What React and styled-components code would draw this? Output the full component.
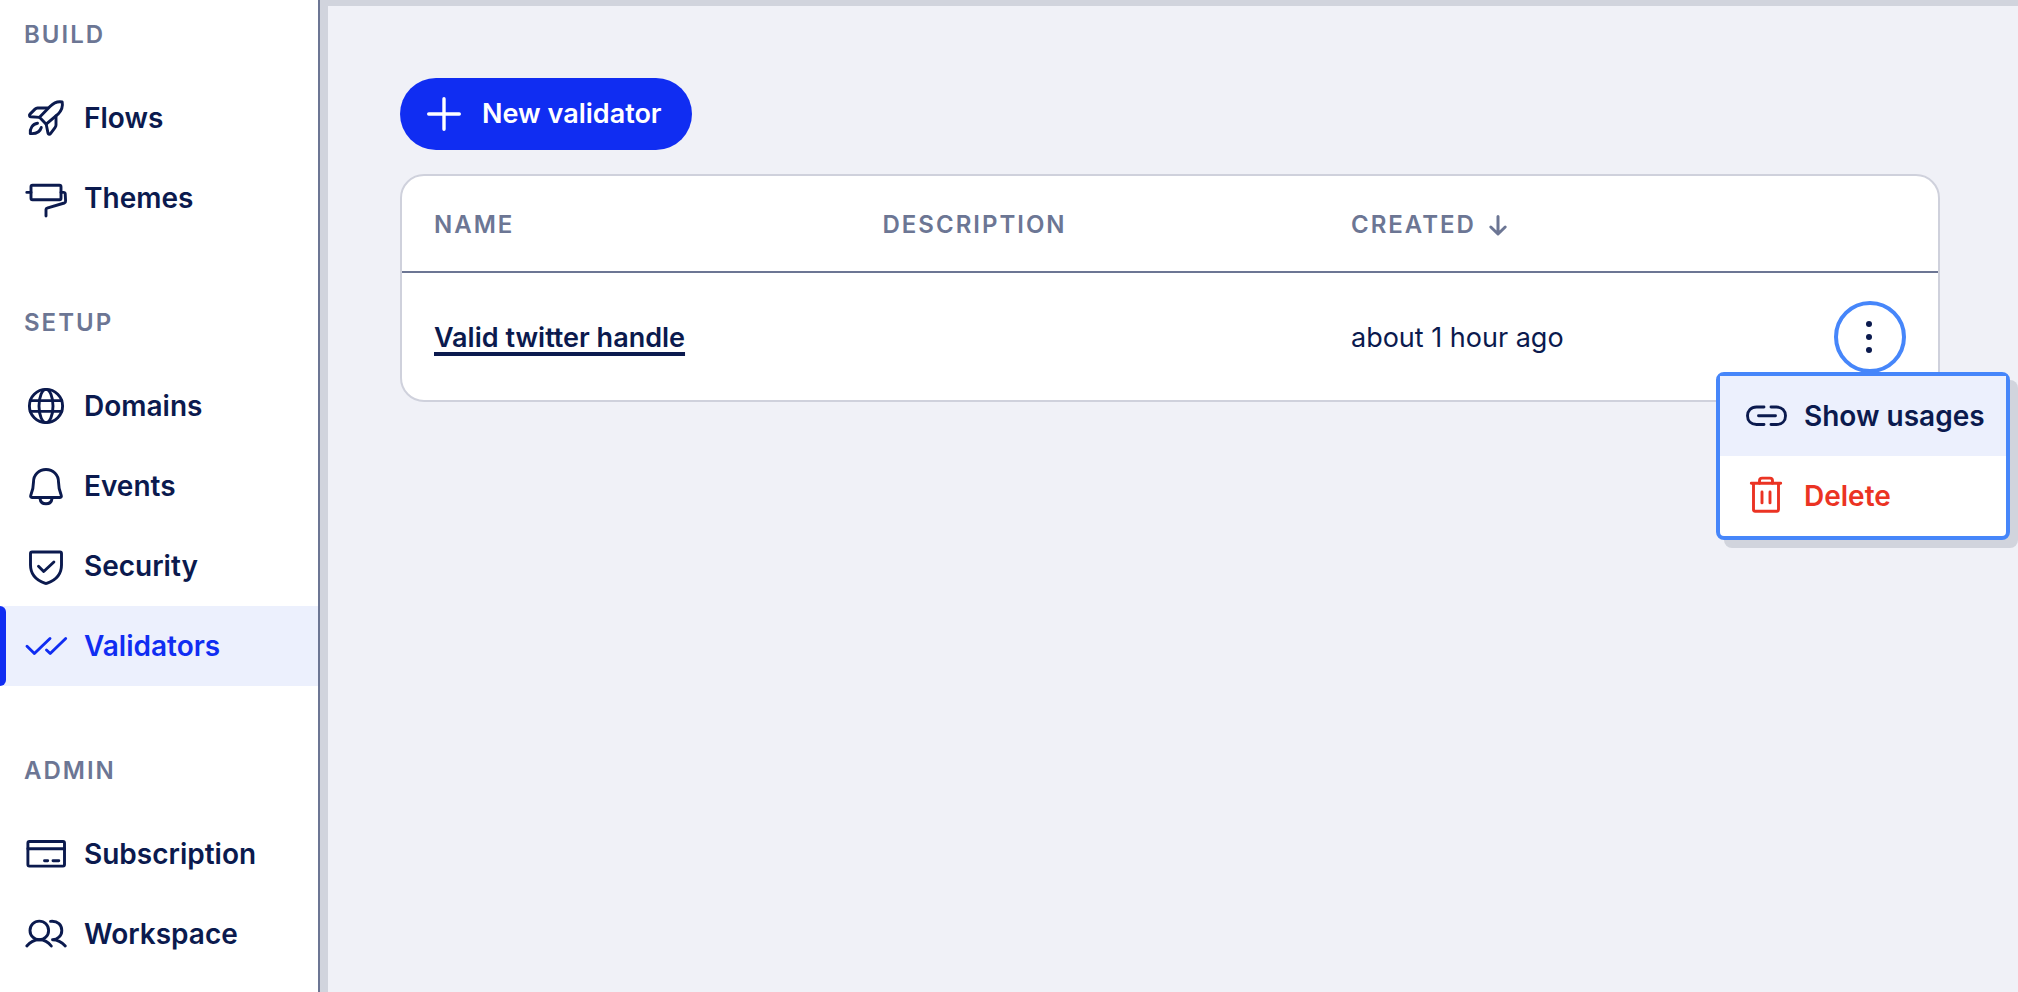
import React, { useState } from "react";
import styled, { createGlobalStyle, ThemeProvider } from "styled-components";

const theme = {
  navy: "#0b1a4e",
  primary: "#102df2",
  focus: "#4686fa",
  danger: "#eb3323",
  muted: "#6c7694",
  line: "#cfd1dc",
  shade: "#d1d4dd",
  highlight: "#ecf0fd",
  canvas: "#f0f1f7",
  white: "#ffffff",
};

const GlobalStyle = createGlobalStyle`
  * {
    box-sizing: border-box;
  }

  body {
    margin: 0;
    font-family: Inter, "Liberation Sans", sans-serif;
    font-size: 27px;
    line-height: 36px;
    color: ${theme.navy};
    background-color: ${theme.canvas};
  }

  button {
    font: inherit;
    color: inherit;
    border: none;
    padding: 0;
    background: none;
    cursor: pointer;
  }
`;

const Layout = styled.div`
  display: flex;
  min-height: 100vh;
`;

const Sidebar = styled.nav`
  flex: 0 0 320px;
  display: flex;
  flex-direction: column;
  gap: 70px;
  padding: 20px 0 18px;
  background-color: ${(props) => props.theme.white};
  border-right: 2px solid ${(props) => props.theme.muted};
`;

const GroupTitle = styled.h2`
  margin: 0 0 28px;
  padding-left: 24px;
  font-size: 24px;
  line-height: 30px;
  font-weight: 600;
  letter-spacing: 2px;
  text-transform: uppercase;
  color: ${(props) => props.theme.muted};
`;

const NavList = styled.ul`
  list-style: none;
  margin: 0;
  padding: 0;
`;

const NavLink = styled.a`
  position: relative;
  display: flex;
  align-items: center;
  gap: 14px;
  height: 80px;
  padding-left: 22px;
  font-size: 28px;
  font-weight: 600;
  text-decoration: none;
  color: ${(props) => (props.$active ? props.theme.primary : props.theme.navy)};
  background-color: ${(props) =>
    props.$active ? props.theme.highlight : "transparent"};

  &::before {
    content: "";
    display: ${(props) => (props.$active ? "block" : "none")};
    position: absolute;
    inset: 0 auto 0 0;
    width: 6px;
    border-radius: 0 6px 6px 0;
    background-color: ${(props) => props.theme.primary};
  }
`;

const Svg = styled.svg`
  flex: none;
  width: 48px;
  height: 48px;
  fill: none;
  stroke: currentColor;
  stroke-width: 2.9;
  stroke-linecap: round;
  stroke-linejoin: round;
`;

const Main = styled.main`
  flex: 1;
  min-width: 0;
  display: flex;
  flex-direction: column;
  align-items: flex-start;
  gap: 24px;
  padding: 72px 78px 72px 72px;
  border-top: 6px solid ${(props) => props.theme.shade};
  border-left: 8px solid ${(props) => props.theme.shade};
`;

const NewButton = styled.button`
  display: flex;
  align-items: center;
  gap: 14px;
  height: 72px;
  padding: 0 30px 0 20px;
  border-radius: 36px;
  font-weight: 600;
  color: ${(props) => props.theme.white};
  background-color: ${(props) => props.theme.primary};
`;

const Card = styled.div`
  width: 100%;
  border: 2px solid ${(props) => props.theme.line};
  border-radius: 24px;
  background-color: ${(props) => props.theme.white};
`;

const Table = styled.table`
  width: 100%;
  table-layout: fixed;
  border-collapse: separate;
  border-spacing: 0;
  text-align: left;
`;

const HeadCell = styled.th`
  width: ${(props) => props.$width};
  height: 97px;
  padding: 2px 32px 0;
  border-bottom: 2px solid ${(props) => props.theme.muted};
  font-size: 24px;
  line-height: 30px;
  font-weight: 600;
  letter-spacing: 2px;
  text-transform: uppercase;
  color: ${(props) => props.theme.muted};
`;

const SortButton = styled.button`
  display: flex;
  align-items: center;
  gap: 10px;
  letter-spacing: inherit;
  text-transform: inherit;
`;

const SortIcon = styled(Svg)`
  width: 24px;
  height: 24px;
`;

const Cell = styled.td`
  height: 127px;
  padding: ${(props) => (props.$flush ? "0 32px" : "2px 32px 0")};
`;

const ValidatorLink = styled.a`
  font-weight: 600;
  color: ${(props) => props.theme.navy};
  text-decoration: underline 4px;
  text-decoration-skip-ink: none;
  text-underline-offset: 5px;
`;

const Actions = styled.div`
  position: relative;
  width: 72px;
  margin-left: auto;
`;

const MoreButton = styled.button`
  display: flex;
  align-items: center;
  justify-content: center;
  width: 72px;
  height: 72px;
  border: 4px solid
    ${(props) => (props.$open ? props.theme.focus : "transparent")};
  border-radius: 50%;
`;

const Menu = styled.div`
  position: absolute;
  top: 71px;
  right: -104px;
  width: 294px;
  border: 4px solid ${(props) => props.theme.focus};
  border-radius: 8px;
  background-color: ${(props) => props.theme.white};
  box-shadow: 8px 8px 0 ${(props) => props.theme.shade};
`;

const MenuItem = styled.button`
  display: flex;
  align-items: center;
  gap: 14px;
  width: 100%;
  height: 80px;
  padding: 0 20px 0 22px;
  font-size: 28px;
  font-weight: 600;
  white-space: nowrap;
  color: ${(props) => (props.$danger ? props.theme.danger : props.theme.navy)};
  background-color: ${(props) =>
    props.$selected ? props.theme.highlight : "transparent"};
`;

const icons = {
  rocket: (
    <>
      <path d="M17.5 23.2 28 12.5C31.5 9 36.5 7.2 40.2 8c.8 4-.8 8.7-4.200 12.200L24.200 30.200Z" />
      <path d="M25.500 14H15.500c-1 0-1.800.4-2.500 1.100l-5 5c-1 1-.6 2.500.8 2.700l8.700.6M34 22v9c0 1-.4 1.900-1 2.600l-4.500 6c-.8 1-2.200.8-2.500-.5L24.200 30.200" />
      <path d="M15.500 29.300C10.500 30 7.800 34.500 8.300 39.500 14 40 18 38 19.300 33.500" />
    </>
  ),
  roller: (
    <>
      <rect x="9" y="11.300" width="30" height="14.400" rx="1.500" />
      <path d="M4.800 18.400H9M39 18.400h2.500c1 0 1.600.4 1.700 1.300l.4 7.300c.1 1-.4 1.700-1.300 2L25 34.200c-.8.2-1 .6-1 1.300v6.500" />
    </>
  ),
  globe: (
    <>
      <circle cx="24" cy="24" r="16.600" />
      <ellipse cx="24" cy="24" rx="7" ry="16.600" />
      <path d="M8.200 18.600h31.600M8.200 29.400h31.600" />
    </>
  ),
  bell: (
    <>
      <path d="M11.500 20C11.500 12.500 17 7.500 24 7.500S36.500 12.500 36.500 20c0 5 1 9 2.700 13.200.5 1.300 0 2.300-1.200 2.300H10c-1.200 0-1.700-1-1.200-2.300C10.500 29 11.500 25 11.500 20Z" />
      <path d="M18 36.500c.4 3.500 2.800 5.300 6 5.300s5.600-1.800 6-5.300" />
    </>
  ),
  shield: (
    <>
      <path d="M8.500 11.500c0-.9.6-1.500 1.500-1.500h28c.9 0 1.500.6 1.500 1.500V23c0 9-5.500 15-14.200 18.200-.9.4-1.700.4-2.600 0C14 38 8.500 32 8.500 23Z" />
      <path d="m16.500 24.300 5.200 5.200 10.200-9.500" />
    </>
  ),
  checks: <path d="m5 24.200 7.400 7.300 15.600-15M24.500 28l3.700 3.500 15.500-15" />,
  card: (
    <>
      <rect x="5.900" y="11.500" width="36.600" height="24.600" rx="1.500" />
      <path d="M5.900 18.700h36.600M22.500 30.700h3.200M31 30.700h5.800" />
    </>
  ),
  people: (
    <>
      <circle cx="17.300" cy="20.400" r="9.300" />
      <path d="M4.800 36C8.500 31.500 13 29.700 17.300 29.700S26 31.500 29.300 36" />
      <path d="M28.500 11.400C36 10.700 39.800 15 39.800 20.500c0 5.200-4.200 9.200-9.300 9.200 4.800 0 9 2 12.800 6.300" />
    </>
  ),
  plus: <path d="M24 8.700v30.600M8.700 24h30.600" strokeWidth="3.400" />,
  link: (
    <path d="M22 15h-7.500c-5.500 0-9 3.700-9 8.800s3.500 8.700 9 8.700H22M29 15h5.500c5.500 0 9 3.700 9 8.800s-3.500 8.700-9 8.700H29M16.500 23.800h17" />
  ),
  trash: (
    <>
      <path d="M9.300 11.300h29.400M11.500 11.300V37.600c0 1 .5 1.700 1.700 1.700h21.600c1.200 0 1.700-.7 1.700-1.700V11.300" />
      <path d="M17.500 11.300V8.700c0-1.600.9-2.600 2.600-2.600h7.800c1.700 0 2.600 1 2.600 2.600v2.600M20 19.900v11M28 19.900v11" />
    </>
  ),
  dots: (
    <g fill="currentColor" stroke="none">
      <circle cx="23" cy="11" r="3" />
      <circle cx="23" cy="24" r="3" />
      <circle cx="23" cy="37" r="3" />
    </g>
  ),
};

const Icon = ({ name }) => (
  <Svg viewBox="0 0 48 48" aria-hidden="true">
    {icons[name]}
  </Svg>
);

const navGroups = [
  {
    title: "Build",
    items: [
      { label: "Flows", icon: "rocket" },
      { label: "Themes", icon: "roller" },
    ],
  },
  {
    title: "Setup",
    items: [
      { label: "Domains", icon: "globe" },
      { label: "Events", icon: "bell" },
      { label: "Security", icon: "shield" },
      { label: "Validators", icon: "checks", active: true },
    ],
  },
  {
    title: "Admin",
    items: [
      { label: "Subscription", icon: "card" },
      { label: "Workspace", icon: "people" },
    ],
  },
];

const validators = [
  { name: "Valid twitter handle", description: "", created: "about 1 hour ago" },
];

const RowActions = () => {
  const [open, setOpen] = useState(true);

  return (
    <Actions>
      <MoreButton
        type="button"
        aria-label="More actions"
        aria-haspopup="menu"
        aria-expanded={open}
        $open={open}
        onClick={() => setOpen(!open)}
      >
        <Icon name="dots" />
      </MoreButton>
      {open && (
        <Menu role="menu">
          <MenuItem type="button" role="menuitem" $selected>
            <Icon name="link" />
            Show usages
          </MenuItem>
          <MenuItem type="button" role="menuitem" $danger>
            <Icon name="trash" />
            Delete
          </MenuItem>
        </Menu>
      )}
    </Actions>
  );
};

const App = () => {
  return (
    <ThemeProvider theme={theme}>
      <GlobalStyle />
      <Layout>
        <Sidebar>
          {navGroups.map((group) => (
            <section key={group.title}>
              <GroupTitle>{group.title}</GroupTitle>
              <NavList>
                {group.items.map((item) => (
                  <li key={item.label}>
                    <NavLink
                      href={`#${item.label.toLowerCase()}`}
                      $active={item.active}
                      aria-current={item.active ? "page" : undefined}
                    >
                      <Icon name={item.icon} />
                      {item.label}
                    </NavLink>
                  </li>
                ))}
              </NavList>
            </section>
          ))}
        </Sidebar>
        <Main>
          <NewButton type="button">
            <Icon name="plus" />
            New validator
          </NewButton>
          <Card>
            <Table>
              <thead>
                <tr>
                  <HeadCell $width="29.2%">Name</HeadCell>
                  <HeadCell $width="30.5%">Description</HeadCell>
                  <HeadCell aria-sort="descending">
                    <SortButton type="button">
                      Created
                      <SortIcon viewBox="0 0 24 24" aria-hidden="true">
                        <path d="M12 3.500v17M4.800 14l7.200 7 7.200-7" strokeWidth="3" />
                      </SortIcon>
                    </SortButton>
                  </HeadCell>
                  <HeadCell $width="136px" aria-label="Actions" />
                </tr>
              </thead>
              <tbody>
                {validators.map((validator) => (
                  <tr key={validator.name}>
                    <Cell>
                      <ValidatorLink href="#validator">
                        {validator.name}
                      </ValidatorLink>
                    </Cell>
                    <Cell>{validator.description}</Cell>
                    <Cell>{validator.created}</Cell>
                    <Cell $flush>
                      <RowActions />
                    </Cell>
                  </tr>
                ))}
              </tbody>
            </Table>
          </Card>
        </Main>
      </Layout>
    </ThemeProvider>
  );
};

export default App;
